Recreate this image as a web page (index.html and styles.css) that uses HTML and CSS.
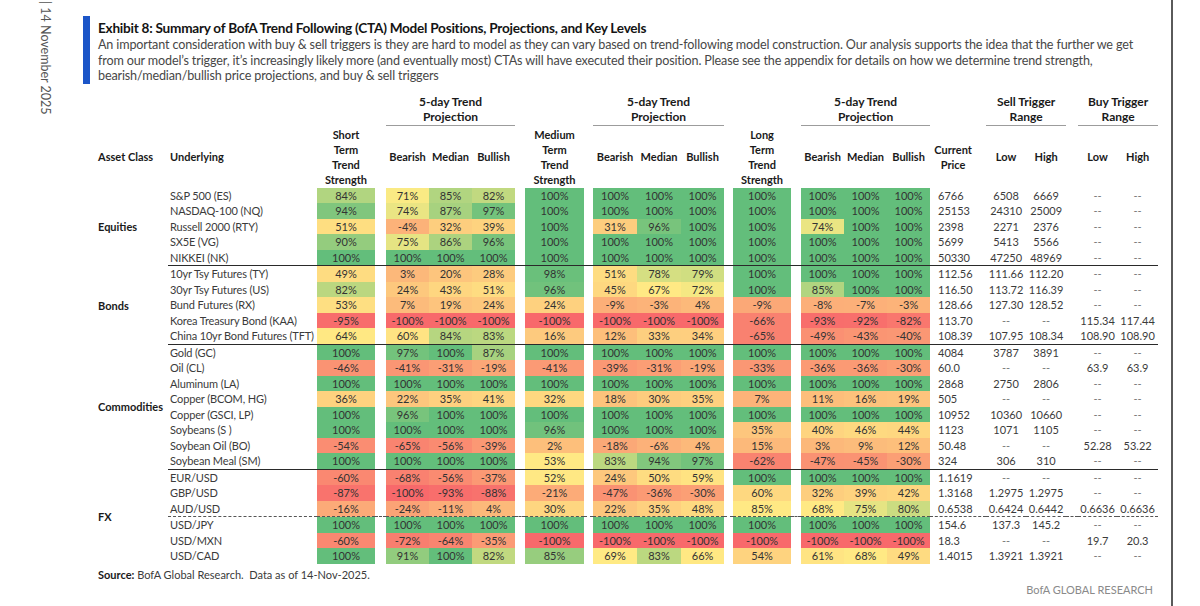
FILE: index.html
```html
<!DOCTYPE html>
<html lang="en">
<head>
<meta charset="utf-8">
<title>Exhibit 8: Summary of BofA Trend Following (CTA) Model Positions</title>
<link rel="stylesheet" href="styles.css">
</head>
<body>
<div class="page">
  <aside class="side"><span class="date">| 14 November 2025</span></aside>
  <main class="main">
    <header class="exhibit">
      <h1>Exhibit 8: Summary of BofA Trend Following (CTA) Model Positions, Projections, and Key Levels</h1>
      <p>An important consideration with buy &amp; sell triggers is they are hard to model as they can vary based on trend-following model construction. Our analysis supports the idea that the further we get<br>from our model’s trigger, it’s increasingly likely more (and eventually most) CTAs will have executed their position. Please see the appendix for details on how we determine trend strength,<br>bearish/median/bullish price projections, and buy &amp; sell triggers</p>
    </header>
    <table class="cta">
      <colgroup>
        <col class="w70"><col class="w149"><col class="w58"><col class="w11">
        <col class="w43"><col class="w43"><col class="w43"><col class="w10">
        <col class="w59"><col class="w9">
        <col class="w44"><col class="w44"><col class="w43"><col class="w9">
        <col class="w58"><col class="w10">
        <col class="w43"><col class="w43"><col class="w43">
        <col class="w56"><col class="w40"><col class="w40"><col class="w12"><col class="w39"><col class="w41">
      </colgroup>
      <thead>
        <tr class="ha">
          <th></th><th></th><th></th><th></th>
          <th class="grp" colspan="3">5-day Trend<br>Projection</th>
          <th></th><th></th><th></th>
          <th class="grp" colspan="3">5-day Trend<br>Projection</th>
          <th></th><th></th><th></th>
          <th class="grp" colspan="3">5-day Trend<br>Projection</th>
          <th></th>
          <th class="grp" colspan="2">Sell Trigger<br>Range</th>
          <th></th>
          <th class="grp" colspan="2">Buy Trigger<br>Range</th>
        </tr>
        <tr class="hb">
          <th class="l">Asset Class</th>
          <th class="l ul">Underlying</th>
          <th>Short<br>Term<br>Trend<br>Strength</th>
          <th></th>
          <th>Bearish</th><th>Median</th><th>Bullish</th>
          <th></th>
          <th>Medium<br>Term<br>Trend<br>Strength</th>
          <th></th>
          <th>Bearish</th><th>Median</th><th>Bullish</th>
          <th></th>
          <th>Long<br>Term<br>Trend<br>Strength</th>
          <th></th>
          <th>Bearish</th><th>Median</th><th>Bullish</th>
          <th class="cp">Current<br>Price</th>
          <th>Low</th><th>High</th>
          <th></th>
          <th>Low</th><th>High</th>
        </tr>
      </thead>
      <tbody>
        <tr><td class="ac" rowspan="5">Equities</td><td class="un">S&amp;P 500 (ES)</td><td class="c">84%</td><td></td><td class="c">71%</td><td class="c">85%</td><td class="c">82%</td><td></td><td class="c">100%</td><td></td><td class="c">100%</td><td class="c">100%</td><td class="c">100%</td><td></td><td class="c">100%</td><td></td><td class="c">100%</td><td class="c">100%</td><td class="c">100%</td><td class="pr">6766</td><td class="n">6508</td><td class="n">6669</td><td></td><td class="n d">--</td><td class="n d">--</td></tr>
        <tr><td class="un">NASDAQ-100 (NQ)</td><td class="c">94%</td><td></td><td class="c">74%</td><td class="c">87%</td><td class="c">97%</td><td></td><td class="c">100%</td><td></td><td class="c">100%</td><td class="c">100%</td><td class="c">100%</td><td></td><td class="c">100%</td><td></td><td class="c">100%</td><td class="c">100%</td><td class="c">100%</td><td class="pr">25153</td><td class="n">24310</td><td class="n">25009</td><td></td><td class="n d">--</td><td class="n d">--</td></tr>
        <tr><td class="un">Russell 2000 (RTY)</td><td class="c">51%</td><td></td><td class="c">-4%</td><td class="c">32%</td><td class="c">39%</td><td></td><td class="c">100%</td><td></td><td class="c">31%</td><td class="c">96%</td><td class="c">100%</td><td></td><td class="c">100%</td><td></td><td class="c">74%</td><td class="c">100%</td><td class="c">100%</td><td class="pr">2398</td><td class="n">2271</td><td class="n">2376</td><td></td><td class="n d">--</td><td class="n d">--</td></tr>
        <tr><td class="un">SX5E (VG)</td><td class="c">90%</td><td></td><td class="c">75%</td><td class="c">86%</td><td class="c">96%</td><td></td><td class="c">100%</td><td></td><td class="c">100%</td><td class="c">100%</td><td class="c">100%</td><td></td><td class="c">100%</td><td></td><td class="c">100%</td><td class="c">100%</td><td class="c">100%</td><td class="pr">5699</td><td class="n">5413</td><td class="n">5566</td><td></td><td class="n d">--</td><td class="n d">--</td></tr>
        <tr class="sep"><td class="un">NIKKEI (NK)</td><td class="c">100%</td><td></td><td class="c">100%</td><td class="c">100%</td><td class="c">100%</td><td></td><td class="c">100%</td><td></td><td class="c">100%</td><td class="c">100%</td><td class="c">100%</td><td></td><td class="c">100%</td><td></td><td class="c">100%</td><td class="c">100%</td><td class="c">100%</td><td class="pr">50330</td><td class="n">47250</td><td class="n">48969</td><td></td><td class="n d">--</td><td class="n d">--</td></tr>

        <tr><td class="ac" rowspan="5">Bonds</td><td class="un">10yr Tsy Futures (TY)</td><td class="c">49%</td><td></td><td class="c">3%</td><td class="c">20%</td><td class="c">28%</td><td></td><td class="c">98%</td><td></td><td class="c">51%</td><td class="c">78%</td><td class="c">79%</td><td></td><td class="c">100%</td><td></td><td class="c">100%</td><td class="c">100%</td><td class="c">100%</td><td class="pr">112.56</td><td class="n">111.66</td><td class="n">112.20</td><td></td><td class="n d">--</td><td class="n d">--</td></tr>
        <tr><td class="un">30yr Tsy Futures (US)</td><td class="c">82%</td><td></td><td class="c">24%</td><td class="c">43%</td><td class="c">51%</td><td></td><td class="c">96%</td><td></td><td class="c">45%</td><td class="c">67%</td><td class="c">72%</td><td></td><td class="c">100%</td><td></td><td class="c">85%</td><td class="c">100%</td><td class="c">100%</td><td class="pr">116.50</td><td class="n">113.72</td><td class="n">116.39</td><td></td><td class="n d">--</td><td class="n d">--</td></tr>
        <tr><td class="un">Bund Futures (RX)</td><td class="c">53%</td><td></td><td class="c">7%</td><td class="c">19%</td><td class="c">24%</td><td></td><td class="c">24%</td><td></td><td class="c">-9%</td><td class="c">-3%</td><td class="c">4%</td><td></td><td class="c">-9%</td><td></td><td class="c">-8%</td><td class="c">-7%</td><td class="c">-3%</td><td class="pr">128.66</td><td class="n">127.30</td><td class="n">128.52</td><td></td><td class="n d">--</td><td class="n d">--</td></tr>
        <tr><td class="un">Korea Treasury Bond (KAA)</td><td class="c">-95%</td><td></td><td class="c">-100%</td><td class="c">-100%</td><td class="c">-100%</td><td></td><td class="c">-100%</td><td></td><td class="c">-100%</td><td class="c">-100%</td><td class="c">-100%</td><td></td><td class="c">-66%</td><td></td><td class="c">-93%</td><td class="c">-92%</td><td class="c">-82%</td><td class="pr">113.70</td><td class="n d">--</td><td class="n d">--</td><td></td><td class="n">115.34</td><td class="n">117.44</td></tr>
        <tr class="sep"><td class="un">China 10yr Bond Futures (TFT)</td><td class="c">64%</td><td></td><td class="c">60%</td><td class="c">84%</td><td class="c">83%</td><td></td><td class="c">16%</td><td></td><td class="c">12%</td><td class="c">33%</td><td class="c">34%</td><td></td><td class="c">-65%</td><td></td><td class="c">-49%</td><td class="c">-43%</td><td class="c">-40%</td><td class="pr">108.39</td><td class="n">107.95</td><td class="n">108.34</td><td></td><td class="n">108.90</td><td class="n">108.90</td></tr>

        <tr><td class="ac" rowspan="8">Commodities</td><td class="un">Gold (GC)</td><td class="c">100%</td><td></td><td class="c">97%</td><td class="c">100%</td><td class="c">87%</td><td></td><td class="c">100%</td><td></td><td class="c">100%</td><td class="c">100%</td><td class="c">100%</td><td></td><td class="c">100%</td><td></td><td class="c">100%</td><td class="c">100%</td><td class="c">100%</td><td class="pr">4084</td><td class="n">3787</td><td class="n">3891</td><td></td><td class="n d">--</td><td class="n d">--</td></tr>
        <tr><td class="un">Oil (CL)</td><td class="c">-46%</td><td></td><td class="c">-41%</td><td class="c">-31%</td><td class="c">-19%</td><td></td><td class="c">-41%</td><td></td><td class="c">-39%</td><td class="c">-31%</td><td class="c">-19%</td><td></td><td class="c">-33%</td><td></td><td class="c">-36%</td><td class="c">-36%</td><td class="c">-30%</td><td class="pr">60.0</td><td class="n d">--</td><td class="n d">--</td><td></td><td class="n">63.9</td><td class="n">63.9</td></tr>
        <tr><td class="un">Aluminum (LA)</td><td class="c">100%</td><td></td><td class="c">100%</td><td class="c">100%</td><td class="c">100%</td><td></td><td class="c">100%</td><td></td><td class="c">100%</td><td class="c">100%</td><td class="c">100%</td><td></td><td class="c">100%</td><td></td><td class="c">100%</td><td class="c">100%</td><td class="c">100%</td><td class="pr">2868</td><td class="n">2750</td><td class="n">2806</td><td></td><td class="n d">--</td><td class="n d">--</td></tr>
        <tr><td class="un">Copper (BCOM, HG)</td><td class="c">36%</td><td></td><td class="c">22%</td><td class="c">35%</td><td class="c">41%</td><td></td><td class="c">32%</td><td></td><td class="c">18%</td><td class="c">30%</td><td class="c">35%</td><td></td><td class="c">7%</td><td></td><td class="c">11%</td><td class="c">16%</td><td class="c">19%</td><td class="pr">505</td><td class="n d">--</td><td class="n d">--</td><td></td><td class="n d">--</td><td class="n d">--</td></tr>
        <tr><td class="un">Copper (GSCI, LP)</td><td class="c">100%</td><td></td><td class="c">96%</td><td class="c">100%</td><td class="c">100%</td><td></td><td class="c">100%</td><td></td><td class="c">100%</td><td class="c">100%</td><td class="c">100%</td><td></td><td class="c">100%</td><td></td><td class="c">100%</td><td class="c">100%</td><td class="c">100%</td><td class="pr">10952</td><td class="n">10360</td><td class="n">10660</td><td></td><td class="n d">--</td><td class="n d">--</td></tr>
        <tr><td class="un">Soybeans (S )</td><td class="c">100%</td><td></td><td class="c">100%</td><td class="c">100%</td><td class="c">100%</td><td></td><td class="c">96%</td><td></td><td class="c">100%</td><td class="c">100%</td><td class="c">100%</td><td></td><td class="c">35%</td><td></td><td class="c">40%</td><td class="c">46%</td><td class="c">44%</td><td class="pr">1123</td><td class="n">1071</td><td class="n">1105</td><td></td><td class="n d">--</td><td class="n d">--</td></tr>
        <tr><td class="un">Soybean Oil (BO)</td><td class="c">-54%</td><td></td><td class="c">-65%</td><td class="c">-56%</td><td class="c">-39%</td><td></td><td class="c">2%</td><td></td><td class="c">-18%</td><td class="c">-6%</td><td class="c">4%</td><td></td><td class="c">15%</td><td></td><td class="c">3%</td><td class="c">9%</td><td class="c">12%</td><td class="pr">50.48</td><td class="n d">--</td><td class="n d">--</td><td></td><td class="n">52.28</td><td class="n">53.22</td></tr>
        <tr class="sep"><td class="un">Soybean Meal (SM)</td><td class="c">100%</td><td></td><td class="c">100%</td><td class="c">100%</td><td class="c">100%</td><td></td><td class="c">53%</td><td></td><td class="c">83%</td><td class="c">94%</td><td class="c">97%</td><td></td><td class="c">-62%</td><td></td><td class="c">-47%</td><td class="c">-45%</td><td class="c">-30%</td><td class="pr">324</td><td class="n">306</td><td class="n">310</td><td></td><td class="n d">--</td><td class="n d">--</td></tr>

        <tr><td class="ac" rowspan="6">FX</td><td class="un">EUR/USD</td><td class="c">-60%</td><td></td><td class="c">-68%</td><td class="c">-56%</td><td class="c">-37%</td><td></td><td class="c">52%</td><td></td><td class="c">24%</td><td class="c">50%</td><td class="c">59%</td><td></td><td class="c">100%</td><td></td><td class="c">100%</td><td class="c">100%</td><td class="c">100%</td><td class="pr">1.1619</td><td class="n d">--</td><td class="n d">--</td><td></td><td class="n d">--</td><td class="n d">--</td></tr>
        <tr><td class="un">GBP/USD</td><td class="c">-87%</td><td></td><td class="c">-100%</td><td class="c">-93%</td><td class="c">-88%</td><td></td><td class="c">-21%</td><td></td><td class="c">-47%</td><td class="c">-36%</td><td class="c">-30%</td><td></td><td class="c">60%</td><td></td><td class="c">32%</td><td class="c">39%</td><td class="c">42%</td><td class="pr">1.3168</td><td class="n">1.2975</td><td class="n">1.2975</td><td></td><td class="n d">--</td><td class="n d">--</td></tr>
        <tr class="dash"><td class="un">AUD/USD</td><td class="c">-16%</td><td></td><td class="c">-24%</td><td class="c">-11%</td><td class="c">4%</td><td></td><td class="c">30%</td><td></td><td class="c">22%</td><td class="c">35%</td><td class="c">48%</td><td></td><td class="c">85%</td><td></td><td class="c">68%</td><td class="c">75%</td><td class="c">80%</td><td class="pr">0.6538</td><td class="n">0.6424</td><td class="n">0.6442</td><td></td><td class="n">0.6636</td><td class="n">0.6636</td></tr>
        <tr><td class="un">USD/JPY</td><td class="c">100%</td><td></td><td class="c">100%</td><td class="c">100%</td><td class="c">100%</td><td></td><td class="c">100%</td><td></td><td class="c">100%</td><td class="c">100%</td><td class="c">100%</td><td></td><td class="c">100%</td><td></td><td class="c">100%</td><td class="c">100%</td><td class="c">100%</td><td class="pr">154.6</td><td class="n">137.3</td><td class="n">145.2</td><td></td><td class="n d">--</td><td class="n d">--</td></tr>
        <tr><td class="un">USD/MXN</td><td class="c">-60%</td><td></td><td class="c">-72%</td><td class="c">-64%</td><td class="c">-35%</td><td></td><td class="c">-100%</td><td></td><td class="c">-100%</td><td class="c">-100%</td><td class="c">-100%</td><td></td><td class="c">-100%</td><td></td><td class="c">-100%</td><td class="c">-100%</td><td class="c">-100%</td><td class="pr">18.3</td><td class="n d">--</td><td class="n d">--</td><td></td><td class="n">19.7</td><td class="n">20.3</td></tr>
        <tr><td class="un">USD/CAD</td><td class="c">100%</td><td></td><td class="c">91%</td><td class="c">100%</td><td class="c">82%</td><td></td><td class="c">85%</td><td></td><td class="c">69%</td><td class="c">83%</td><td class="c">66%</td><td></td><td class="c">54%</td><td></td><td class="c">61%</td><td class="c">68%</td><td class="c">49%</td><td class="pr">1.4015</td><td class="n">1.3921</td><td class="n">1.3921</td><td></td><td class="n d">--</td><td class="n d">--</td></tr>
      </tbody>
    </table>
    <p class="source"><b>Source:</b> BofA Global Research.&nbsp; Data as of 14-Nov-2025.</p>
    <p class="brand">BofA GLOBAL RESEARCH</p>
  </main>
</div>
<script src="script.js"></script>
</body>
</html>
```

FILE: styles.css
```css
html, body {
  margin: 0;
  padding: 0;
  background: #ffffff;
}

.page {
  display: flex;
  height: 606px;
  overflow: hidden;
  font-family: Lato, "Open Sans", "Liberation Sans", sans-serif;
  color: #3b3b3b;
}

.side {
  flex: none;
  width: 83px;
  padding-left: 38px;
  box-sizing: border-box;
}

.date {
  display: block;
  writing-mode: vertical-rl;
  font-size: 12.5px;
  line-height: 14px;
  color: #555555;
  margin-top: 1px;
  white-space: nowrap;
}

.main {
  flex: none;
  width: 1090px;
  box-sizing: border-box;
  border-right: 2px solid #5a5a5a;
}

.exhibit {
  margin-top: 16px;
  border-left: 7px solid #1b55c8;
  padding: 3px 0 0 8px;
  height: 68px;
  box-sizing: border-box;
}

.exhibit h1 {
  margin: 0;
  font-size: 13.6px;
  line-height: 18px;
  font-weight: 700;
  color: #141414;
  letter-spacing: -0.25px;
  white-space: nowrap;
}

.exhibit p {
  margin: 0;
  font-size: 12.6px;
  line-height: 15.5px;
  color: #474747;
  letter-spacing: -0.15px;
  white-space: nowrap;
}

.cta {
  margin: 10px 0 0 15px;
  width: 1060px;
  table-layout: fixed;
  border-collapse: separate;
  border-spacing: 0;
  font-size: 11px;
}

.w70 { width: 70px; }
.w149 { width: 149px; }
.w58 { width: 58px; }
.w59 { width: 59px; }
.w56 { width: 56px; }
.w44 { width: 44px; }
.w43 { width: 43px; }
.w41 { width: 41px; }
.w40 { width: 40px; }
.w39 { width: 39px; }
.w12 { width: 12px; }
.w11 { width: 11px; }
.w10 { width: 10px; }
.w9 { width: 9px; }

.cta th {
  padding: 0;
  font-weight: 700;
  font-size: 11px;
  line-height: 15px;
  color: #1a1a1a;
  text-align: center;
  vertical-align: middle;
  white-space: nowrap;
}

.ha th {
  padding-bottom: 1px;
}

.ha th.grp {
  font-size: 12px;
  border-bottom: 1.5px solid #9c9c9c;
}

.hb th {
  height: 61.5px;
}

.cta th.l {
  text-align: left;
}

.cta th.ul {
  padding-left: 2px;
}

.cta th.cp {
  padding-right: 10px;
}

.cta td {
  padding: 0;
  line-height: 15.5px;
  font-size: 11px;
  color: #3b3b3b;
  white-space: nowrap;
  overflow: hidden;
}

.cta td.ac {
  font-weight: 700;
  color: #1a1a1a;
  vertical-align: middle;
}

.cta td.un {
  padding-left: 2px;
  letter-spacing: -0.15px;
}

.cta td.c {
  text-align: center;
  color: #333333;
}

.cta td.pr {
  padding-left: 8px;
}

.cta td.n {
  text-align: center;
}

.cta td.d {
  color: #777777;
}

.sep td {
  border-bottom: 1.5px solid #2a2a2a;
}

.dash td {
  border-bottom: 1.5px dashed #555555;
}

.source {
  margin: 4px 0 0 15px;
  font-size: 11px;
  line-height: 14px;
  color: #3b3b3b;
}

.source b {
  color: #1a1a1a;
}

.brand {
  margin: 1px 0 0;
  padding-right: 18px;
  text-align: right;
  font-size: 11px;
  line-height: 14px;
  color: #8a8a8a;
}
```

FILE: script.js
```js
(function () {
  var mids = [68, 70, 70, 70, 55, 70, 70, 70, 88, 70, 70, 70];
  var R = [248, 105, 107], Y = [255, 235, 132], G = [99, 190, 123];
  function mix(a, b, t) {
    return a.map(function (v, k) { return Math.round(v + (b[k] - v) * t); });
  }
  var rows = document.querySelectorAll('.cta tbody tr');
  rows.forEach(function (tr) {
    tr.querySelectorAll('td.c').forEach(function (td, i) {
      var v = parseFloat(td.textContent);
      var m = mids[i];
      var c;
      if (v >= m) {
        c = mix(Y, G, (v - m) / (100 - m));
      } else {
        c = mix(R, Y, Math.max(0, (v + 100) / (m + 100)));
      }
      td.style.backgroundColor = 'rgb(' + c.join(',') + ')';
    });
  });
})();
```
